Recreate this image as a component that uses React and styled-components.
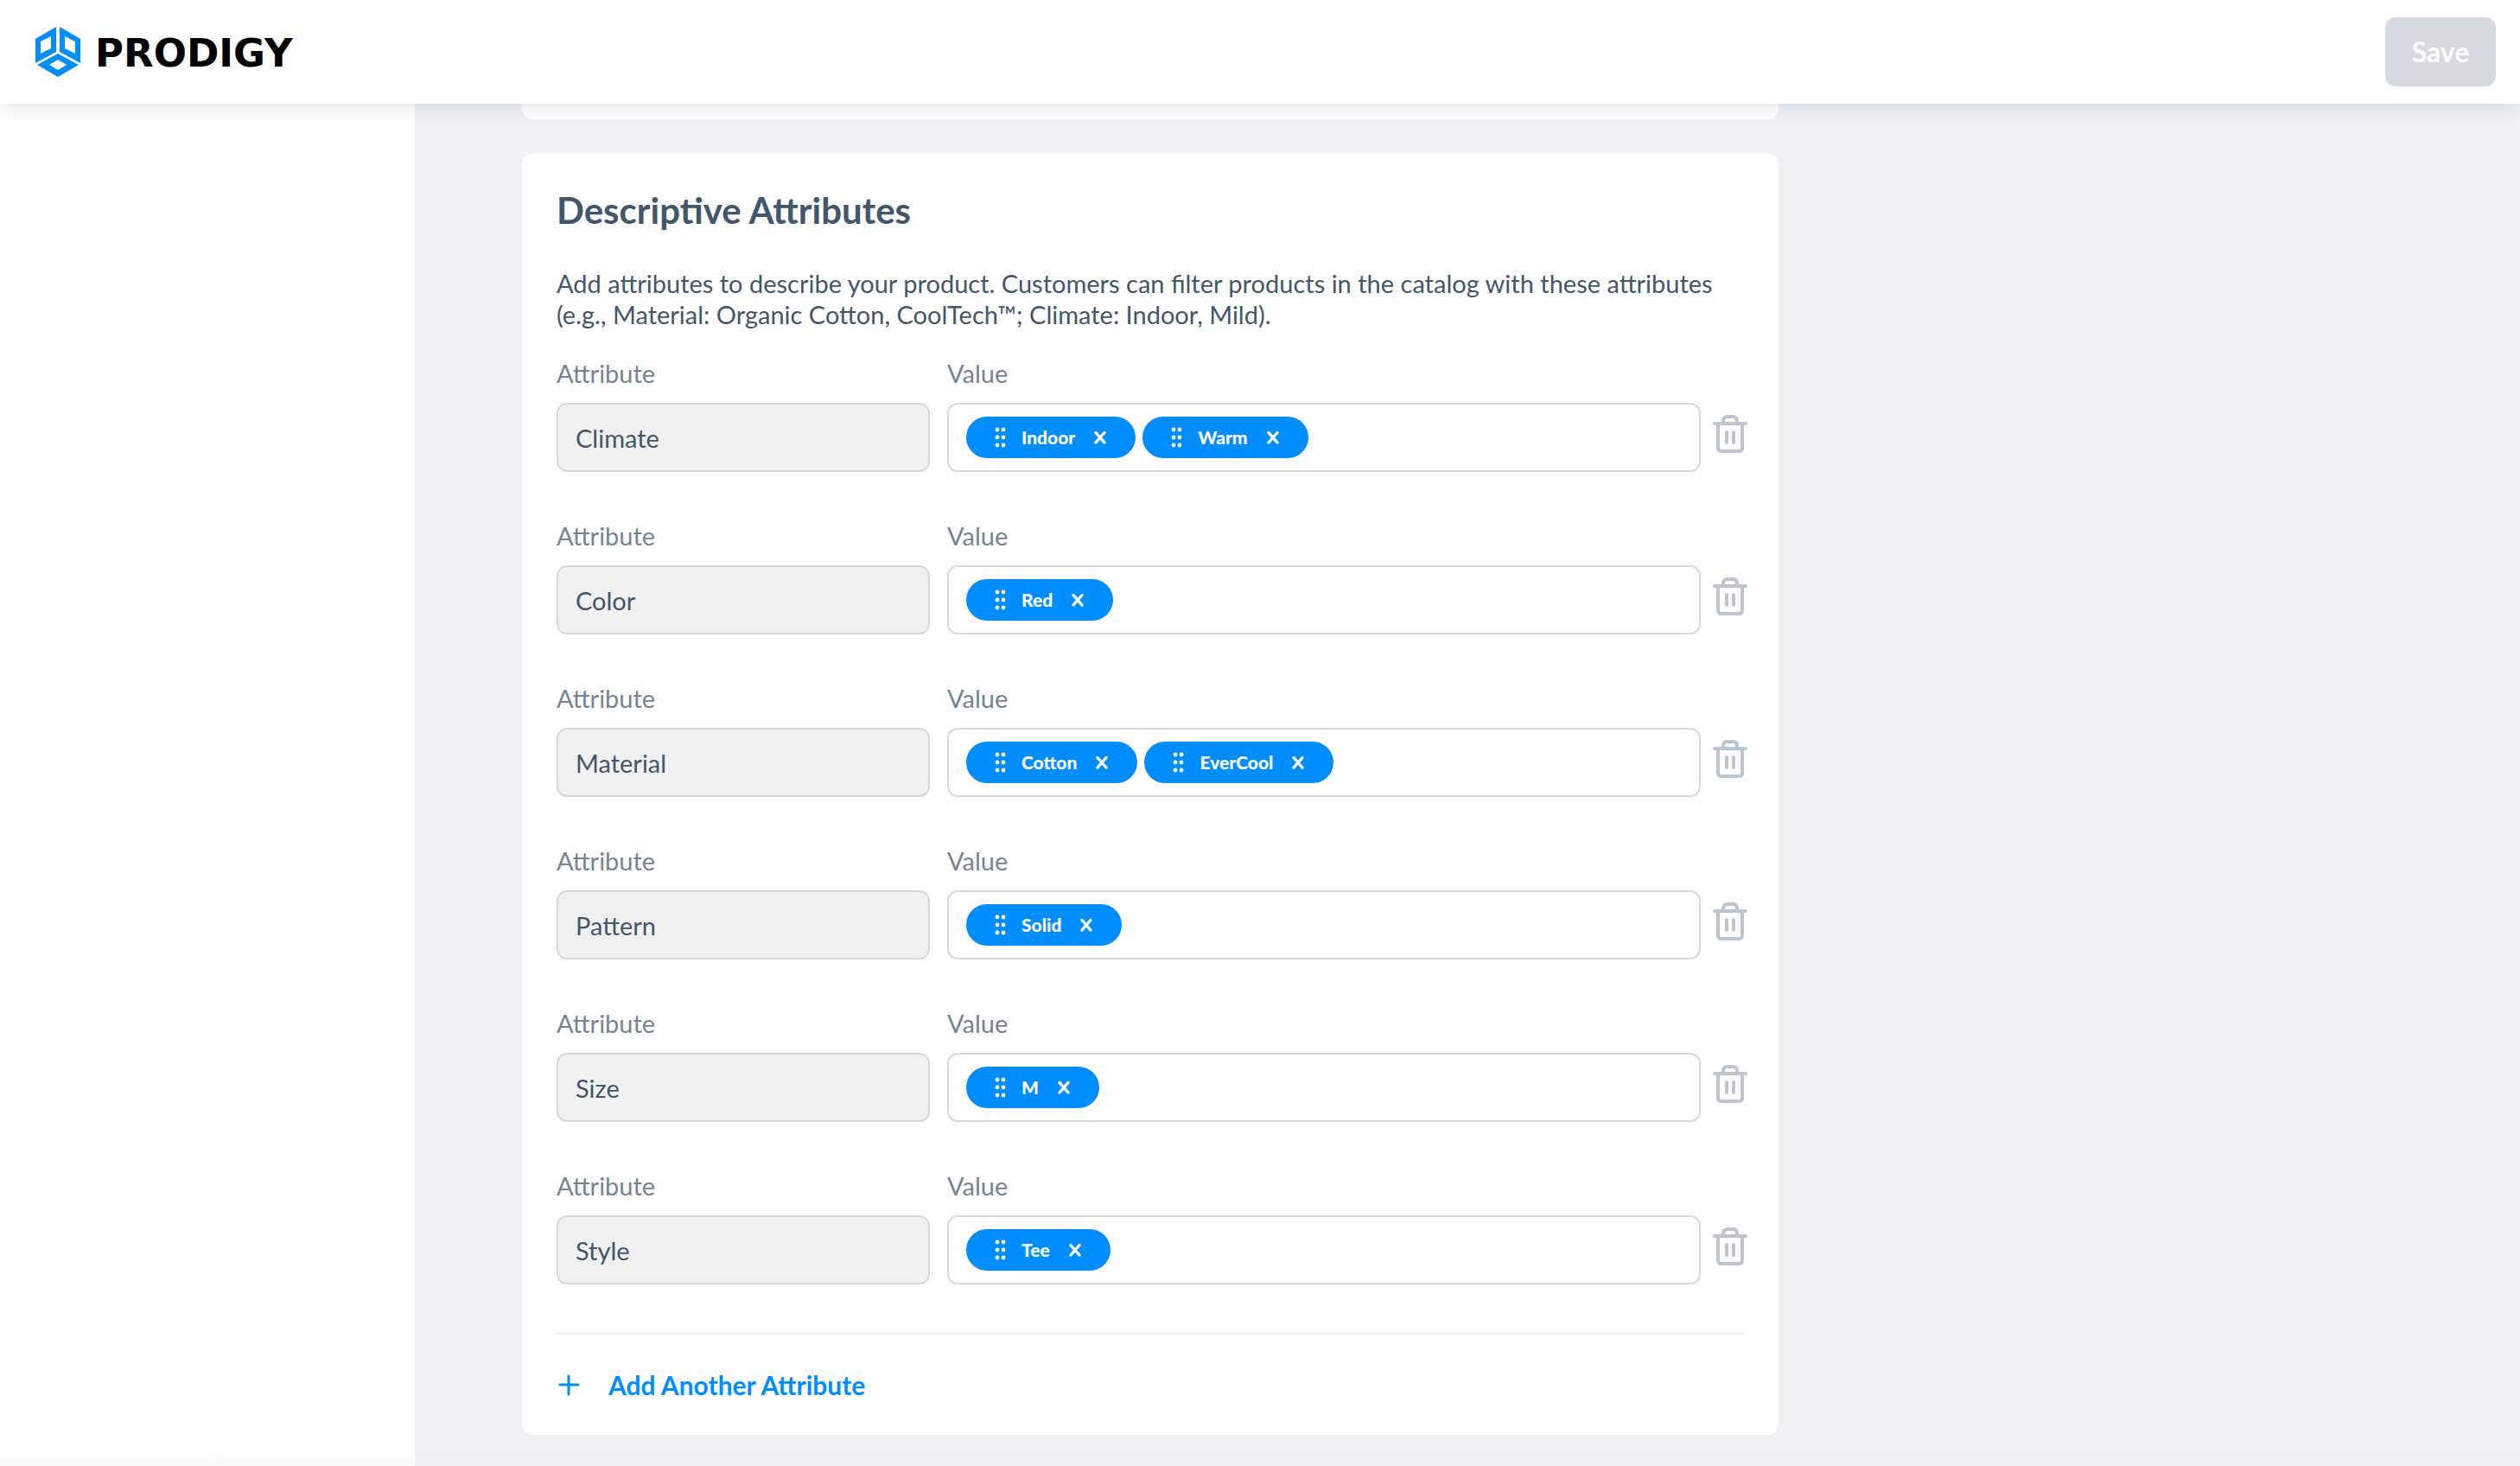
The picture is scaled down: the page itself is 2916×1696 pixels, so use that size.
import React, { useState } from "react";
import styled, { createGlobalStyle } from "styled-components";

const color = {
  blue: "#008dff",
  ink: "#42566c",
  muted: "#748494",
  line: "#d5dae1",
  rule: "#e9eff4",
  canvas: "#eff3f6",
  field: "#f1f1f1",
  icon: "#bcc6d2",
};

const GlobalStyle = createGlobalStyle`
  *, *::before, *::after { box-sizing: border-box; }
  body {
    margin: 0;
    background: ${color.canvas};
    color: ${color.ink};
    font-family: Lato, "Open Sans", sans-serif;
    font-size: 29px;
    line-height: 36px;
  }
  button, input { font: inherit; color: inherit; }
`;

const Page = styled.div`
  display: flex;
  flex-direction: column;
  height: 100vh;
  overflow: hidden;
`;

const TopBar = styled.header`
  position: relative;
  z-index: 1;
  flex: none;
  display: flex;
  align-items: center;
  justify-content: space-between;
  padding: 20px 28px 20px 40px;
  background: #fff;
  box-shadow: 0 4px 20px rgba(66, 86, 108, 0.16);
`;

const Brand = styled.a`
  display: flex;
  align-items: center;
  gap: 16px;
  color: #000;
  text-decoration: none;
  font-family: "DejaVu Sans", sans-serif;
  font-size: 45px;
  font-weight: 700;
`;

const BrandName = styled.span`
  padding-top: 4px;
`;

const SaveButton = styled.button`
  min-width: 128px;
  height: 80px;
  padding: 0 28px;
  border: 0;
  border-radius: 12px;
  background: ${color.line};
  color: #fff;
  font-size: 32px;
  font-weight: 700;
`;

const Body = styled.div`
  position: relative;
  flex: 1;
  min-height: 0;
  display: flex;

  &::after {
    content: "";
    position: absolute;
    inset: auto 0 0;
    height: 24px;
    background: linear-gradient(rgba(66, 86, 108, 0), rgba(66, 86, 108, 0.03));
    pointer-events: none;
  }
`;

const Sidebar = styled.aside`
  flex: none;
  width: 480px;
  background: #fff;
`;

const Content = styled.main`
  flex: 1;
  display: flex;
  flex-direction: column;
  gap: 40px;
  padding: 0 124px;
`;

const Card = styled.section`
  width: 100%;
  max-width: 1454px;
  padding: 40px;
  border-radius: 12px;
  background: #fff;
`;

const PreviousCard = styled(Card)`
  height: 18px;
  padding: 0;
  border-radius: 0 0 12px 12px;
`;

const Title = styled.h2`
  margin: 0 0 42px;
  font-size: 42px;
  line-height: 50px;
  font-weight: 700;
`;

const Intro = styled.p`
  margin: 0 0 32px;
`;

const Rows = styled.div`
  display: flex;
  flex-direction: column;
  gap: 56px;
  margin-right: -4px;
  padding-bottom: 56px;
`;

const Row = styled.div`
  display: flex;
  align-items: flex-end;
  gap: 14px;
`;

const Fields = styled.div`
  flex: 1;
  display: grid;
  grid-template-columns: 432px minmax(0, 1fr);
  column-gap: 20px;
`;

const Field = styled.div`
  display: flex;
  flex-direction: column;
  gap: 16px;
`;

const Label = styled.label`
  color: ${color.muted};
`;

const NameInput = styled.input`
  width: 100%;
  height: 80px;
  padding: 0 20px;
  border: 2px solid ${color.line};
  border-radius: 12px;
  background: ${color.field};
`;

const ValueBox = styled.div`
  display: flex;
  align-items: center;
  gap: 8px;
  height: 80px;
  padding: 0 20px;
  border: 2px solid ${color.line};
  border-radius: 12px;
`;

const ValueInput = styled.input`
  flex: 1;
  min-width: 0;
  border: 0;
  outline: 0;
  background: transparent;
`;

const Chip = styled.span`
  display: flex;
  align-items: center;
  height: 48px;
  padding: 0 32px;
  border-radius: 24px;
  background: ${color.blue};
  color: #fff;
  font-size: 21px;
  font-weight: 900;
`;

const ChipText = styled.span`
  margin: 0 20px 0 16px;
`;

const IconButton = styled.button`
  display: flex;
  padding: 0;
  border: 0;
  background: none;
`;

const DeleteButton = styled(IconButton)`
  margin-bottom: 22px;
`;

const Footer = styled.footer`
  padding-top: 40px;
  border-top: 2px solid ${color.rule};
`;

const AddButton = styled(IconButton)`
  align-items: center;
  gap: 32px;
  color: ${color.blue};
  font-size: 30px;
  font-weight: 700;
`;

const LogoMark = () => (
  <svg width="54" height="60" viewBox="0 0 54 60" fill={color.blue} fillRule="evenodd" aria-hidden="true">
    <path d="M25 1V30L1 43V15ZM19 12L7 18V32L19 26Z" />
    <path d="M29 1V30L53 43V15ZM35 12L47 18V32L35 26Z" />
    <path d="M27 32L51 45L27 59L3 45ZM27 39L17 45L27 51L37 45Z" />
  </svg>
);

const GripIcon = () => (
  <svg width="16" height="24" viewBox="0 0 16 24" fill="currentColor" aria-hidden="true">
    {[3, 12, 21].map((y) => (
      <React.Fragment key={y}>
        <circle cx="4" cy={y} r="2.4" />
        <circle cx="11" cy={y} r="2.4" />
      </React.Fragment>
    ))}
  </svg>
);

const CrossIcon = () => (
  <svg width="18" height="18" viewBox="0 0 18 18" stroke="currentColor" strokeWidth="3.4" strokeLinecap="round" aria-hidden="true">
    <path d="M4 3.500L14 15M14 3.500L4 15" />
  </svg>
);

const TrashIcon = () => (
  <svg width="40" height="44" viewBox="0 0 40 44" fill="none" stroke={color.icon} strokeWidth="4" strokeLinecap="round" aria-hidden="true">
    <path d="M2 10H38M6 11V38Q6 42 10 42H30Q34 42 34 38V11M12 9V7Q12 2 17 2H23Q28 2 28 7V9M16 20V32M24 20V32" />
  </svg>
);

const PlusIcon = () => (
  <svg width="28" height="28" viewBox="0 0 28 28" stroke="currentColor" strokeWidth="3" strokeLinecap="round" aria-hidden="true">
    <path d="M14 4V25M4 14H25" />
  </svg>
);

const initialAttributes = [
  { name: "Climate", values: ["Indoor", "Warm"] },
  { name: "Color", values: ["Red"] },
  { name: "Material", values: ["Cotton", "EverCool"] },
  { name: "Pattern", values: ["Solid"] },
  { name: "Size", values: ["M"] },
  { name: "Style", values: ["Tee"] },
];

function AttributeRow({ id, name, values, onRemoveValue, onRemove }) {
  return (
    <Row>
      <Fields>
        <Field>
          <Label htmlFor={`${id}-name`}>Attribute</Label>
          <NameInput id={`${id}-name`} value={name} readOnly />
        </Field>
        <Field>
          <Label htmlFor={`${id}-value`}>Value</Label>
          <ValueBox>
            {values.map((value) => (
              <Chip key={value}>
                <GripIcon />
                <ChipText>{value}</ChipText>
                <IconButton type="button" aria-label={`Remove ${value}`} onClick={() => onRemoveValue(value)}>
                  <CrossIcon />
                </IconButton>
              </Chip>
            ))}
            <ValueInput id={`${id}-value`} />
          </ValueBox>
        </Field>
      </Fields>
      <DeleteButton type="button" aria-label={`Delete ${name}`} onClick={onRemove}>
        <TrashIcon />
      </DeleteButton>
    </Row>
  );
}

export default function App() {
  const [attributes, setAttributes] = useState(initialAttributes);

  const removeAttribute = (index) => setAttributes((list) => list.filter((_, i) => i !== index));
  const removeValue = (index, value) =>
    setAttributes((list) =>
      list.map((item, i) => (i === index ? { ...item, values: item.values.filter((v) => v !== value) } : item))
    );
  const addAttribute = () => setAttributes((list) => [...list, { name: "", values: [] }]);

  return (
    <>
      <GlobalStyle />
      <Page>
        <TopBar>
          <Brand href="#">
            <LogoMark />
            <BrandName>PRODIGY</BrandName>
          </Brand>
          <SaveButton type="button" disabled>Save</SaveButton>
        </TopBar>
        <Body>
          <Sidebar />
          <Content>
            <PreviousCard />
            <Card>
              <Title>Descriptive Attributes</Title>
              <Intro>
                Add attributes to describe your product. Customers can filter products in the catalog with these
                attributes (e.g., Material: Organic Cotton, CoolTech™; Climate: Indoor, Mild).
              </Intro>
              <Rows>
                {attributes.map((attribute, index) => (
                  <AttributeRow
                    key={index}
                    id={`attribute-${index}`}
                    {...attribute}
                    onRemove={() => removeAttribute(index)}
                    onRemoveValue={(value) => removeValue(index, value)}
                  />
                ))}
              </Rows>
              <Footer>
                <AddButton type="button" onClick={addAttribute}>
                  <PlusIcon />
                  Add Another Attribute
                </AddButton>
              </Footer>
            </Card>
          </Content>
        </Body>
      </Page>
    </>
  );
}
